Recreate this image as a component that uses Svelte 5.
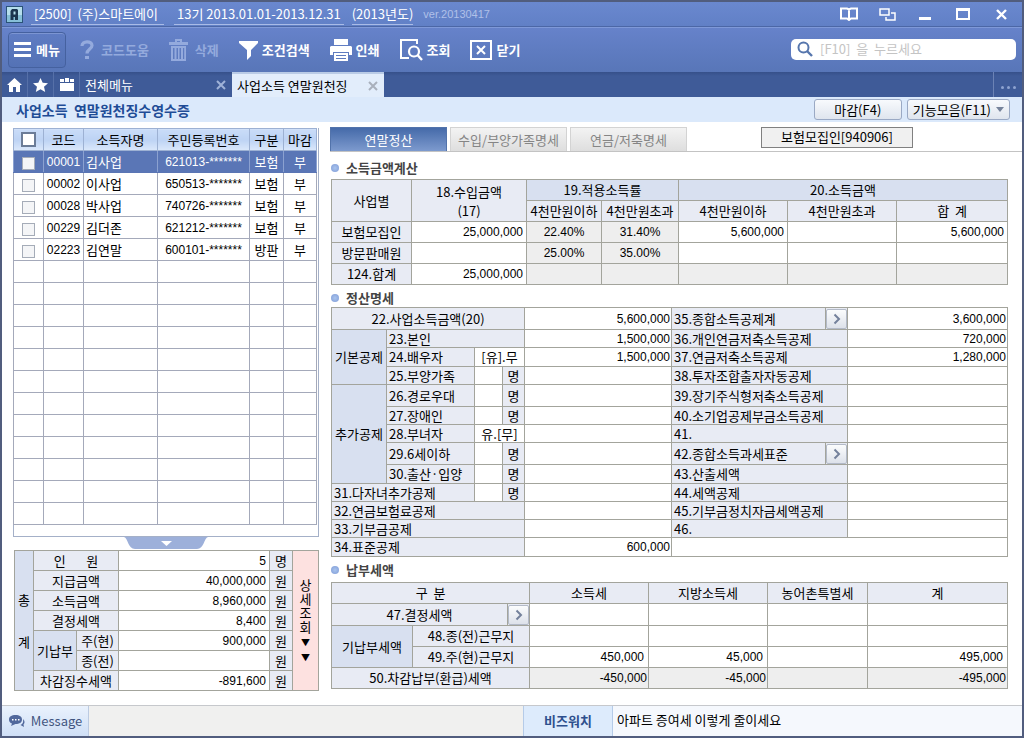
<script lang="ts">
  type Row = {
    size?: string;
    group?: { label: string; span: number };
    label: string;
    labelSpan: number;
    center?: boolean;
    choice?: string;
    count?: boolean;
    value?: string;
    right?: string;
    arrow?: boolean;
    rightValue?: string;
  };

  const menus = [
    { icon: 'help', label: '코드도움', disabled: true },
    { icon: 'trash', label: '삭제', disabled: true },
    { icon: 'filter', label: '조건검색', disabled: false },
    { icon: 'print', label: '인쇄', disabled: false },
    { icon: 'view', label: '조회', disabled: false },
    { icon: 'close', label: '닫기', disabled: false },
  ];

  const people = [
    { code: '00001', name: '김사업', id: '621013-*******', kind: '보험', closed: '부' },
    { code: '00002', name: '이사업', id: '650513-*******', kind: '보험', closed: '부' },
    { code: '00028', name: '박사업', id: '740726-*******', kind: '보험', closed: '부' },
    { code: '00229', name: '김더존', id: '621212-*******', kind: '보험', closed: '부' },
    { code: '02223', name: '김연말', id: '600101-*******', kind: '방판', closed: '부' },
  ];
  const emptyRows = Array(12).fill(0);
  let selected = $state('00001');

  const subTabs = ['연말정산', '수입/부양가족명세', '연금/저축명세'];
  let activeTab = $state('연말정산');

  const incomes = [
    { label: '보험모집인', income: '25,000,000', low: '22.40%', high: '31.40%', a: '5,600,000', total: '5,600,000' },
    { label: '방문판매원', income: '', low: '25.00%', high: '35.00%', a: '', total: '' },
  ];

  const details: Row[] = [
    { size: 'tall', label: '22.사업소득금액(20)', labelSpan: 4, center: true, value: '5,600,000', right: '35.종합소득공제계', arrow: true, rightValue: '3,600,000' },
    { group: { label: '기본공제', span: 3 }, label: '23.본인', labelSpan: 3, value: '1,500,000', right: '36.개인연금저축소득공제', rightValue: '720,000' },
    { size: 'mid', label: '24.배우자', labelSpan: 1, choice: '[유].무', value: '1,500,000', right: '37.연금저축소득공제', rightValue: '1,280,000' },
    { label: '25.부양가족', labelSpan: 1, count: true, right: '38.투자조합출자자동공제' },
    { size: 'tall', group: { label: '추가공제', span: 5 }, label: '26.경로우대', labelSpan: 1, count: true, right: '39.장기주식형저축소득공제' },
    { label: '27.장애인', labelSpan: 1, count: true, right: '40.소기업공제부금소득공제' },
    { label: '28.부녀자', labelSpan: 1, choice: '유.[무]', right: '41.' },
    { size: 'tall', label: '29.6세이하', labelSpan: 1, count: true, right: '42.종합소득과세표준', arrow: true },
    { size: 'mid', label: '30.출산·입양', labelSpan: 1, count: true, right: '43.산출세액' },
    { label: '31.다자녀추가공제', labelSpan: 2, count: true, right: '44.세액공제' },
    { label: '32.연금보험료공제', labelSpan: 4, right: '45.기부금정치자금세액공제' },
    { label: '33.기부금공제', labelSpan: 4, right: '46.' },
    { size: 'mid', label: '34.표준공제', labelSpan: 4, value: '600,000' },
  ];
</script>

{#snippet arrowButton(name: string)}
  <button class="arrow" aria-label={name}>
    <svg width="8" height="12" viewBox="0 0 8 12"><path d="M1.5 1.5 6 6l-4.5 4.5" fill="none" stroke="#74819b" stroke-width="2" /></svg>
  </button>
{/snippet}

{#snippet sectionTitle(text: string)}
  <h2><span class="bullet"></span>{text}</h2>
{/snippet}

<div class="window">
  <header class="titlebar">
    <svg class="logo" width="17" height="17" viewBox="0 0 17 17">
      <rect x="0.5" y="0.5" width="16" height="16" fill="#b5deec" stroke="#2a5378" />
      <path d="M1 9h15v7H1z" fill="#86bfd8" />
      <path d="M6 3h5l1 1v10h-3v-3H7.500v3H4.500V5zM7.500 5.500v3H9.500v-3z" fill="#1b3550" fill-rule="evenodd" />
    </svg>
    <span class="company">[2500]&nbsp; (주)스마트에이</span>
    <span class="term">13기 2013.01.01-2013.12.31</span>
    <span class="year">(2013년도)</span>
    <span class="version">ver.20130417</span>
    <div class="window-buttons">
      <button aria-label="도움말">
        <svg width="18" height="14" viewBox="0 0 18 14"><path d="M1 1.500h6l2 1 2-1h6v10h-6l-2 1.500-2-1.500H1zM9 2v11" fill="none" stroke="#fff" stroke-width="2" /></svg>
      </button>
      <button aria-label="창 전환">
        <svg width="17" height="13" viewBox="0 0 17 13"><path d="M1 1h9v6H1zM12 5h4v7H7V9" fill="none" stroke="#fff" stroke-width="1.500" /></svg>
      </button>
      <button aria-label="최소화">
        <svg width="12" height="14" viewBox="0 0 12 14"><path d="M0 10h12v3H0z" fill="#fff" /></svg>
      </button>
      <button aria-label="최대화">
        <svg width="14" height="13" viewBox="0 0 14 13"><path d="M0 0h14v12H0zM2 3v7h10V3z" fill="#fff" fill-rule="evenodd" /></svg>
      </button>
      <button aria-label="닫기">
        <svg width="11" height="11" viewBox="0 0 11 11"><path d="M1 1l9 9M10 1l-9 9" stroke="#fff" stroke-width="2.400" /></svg>
      </button>
    </div>
  </header>

  <div class="toolbar">
    <button class="menu">
      <svg width="17" height="16" viewBox="0 0 17 16"><path d="M0 0h17v3H0zM0 6h17v3H0zM0 12h17v3H0z" fill="#fff" /></svg>
      메뉴
    </button>
    {#each menus as menu}
      <button class="tool" disabled={menu.disabled}>
        {#if menu.icon === 'help'}
          <svg width="14" height="20" viewBox="0 0 14 20"><path d="M2 6C2 .5 12 .5 12 5.500c0 3.500-5 3.500-5 8" fill="none" stroke="currentColor" stroke-width="3.200" /><path d="M5 16h4v3H5z" fill="currentColor" /></svg>
        {:else if menu.icon === 'trash'}
          <svg width="19" height="22" viewBox="0 0 19 22"><path d="M0 3h6V0h7v3h6v3H0zM8 2v1h3V2zM2 7h15v15H2zM4 9v11h1.500V9zM7.500 9v11H9V9zM10.500 9v11H12V9zM14 9v11h1.200V9z" fill="currentColor" fill-rule="evenodd" /></svg>
        {:else if menu.icon === 'filter'}
          <svg width="19" height="19" viewBox="0 0 19 19"><path d="M0 0h19v2l-7 7v6l-4 4V9L0 2z" fill="currentColor" /></svg>
        {:else if menu.icon === 'print'}
          <svg width="22" height="22" viewBox="0 0 22 22"><path d="M4 0h14v6H4zM1 7h20l1 1v8h-3v-3H3v3H0V8zM4 14h14v8H4zM6 16v1h10v-1zM6 19v1h10v-1z" fill="currentColor" fill-rule="evenodd" /></svg>
        {:else if menu.icon === 'view'}
          <svg width="23" height="22" viewBox="0 0 23 22"><path d="M17 5V1H1v18h8" fill="none" stroke="currentColor" stroke-width="2" /><circle cx="14" cy="12.500" r="5" fill="none" stroke="currentColor" stroke-width="2.200" /><path d="M17.500 16l4.500 5" stroke="currentColor" stroke-width="2.400" /></svg>
        {:else}
          <svg width="22" height="20" viewBox="0 0 22 20"><path d="M1 1h20v18H1zM7 6l8 8M15 6l-8 8" fill="none" stroke="currentColor" stroke-width="2" /></svg>
        {/if}
        {menu.label}
      </button>
    {/each}
    <label class="search">
      <svg width="16" height="16" viewBox="0 0 16 16"><circle cx="6.500" cy="6.500" r="5" fill="none" stroke="#5676ad" stroke-width="2" /><path d="M10 10l5 5" stroke="#5676ad" stroke-width="2.400" /></svg>
      <input type="text" aria-label="검색" placeholder="[F10]  을  누르세요" />
    </label>
  </div>

  <nav class="tabs">
    <button class="icon-tab" aria-label="홈">
      <svg width="15" height="14" viewBox="0 0 15 14"><path d="M7.500 0 15 7h-2v7H9V9H6v5H2V7H0z" fill="#fff" /></svg>
    </button>
    <button class="icon-tab" aria-label="즐겨찾기">
      <svg width="15" height="14" viewBox="0 0 15 14"><path d="M7.500 0l2.200 4.800 5.300.5-4 3.500L12.200 14 7.500 11.300 2.800 14 4 8.800 0 5.300l5.300-.5z" fill="#fff" /></svg>
    </button>
    <button class="icon-tab" aria-label="모음">
      <svg width="14" height="13" viewBox="0 0 14 13"><path d="M0 5h14v8H0zM0 1h4v3H0zM5 0h4v4H5zM10 1h4v3h-4z" fill="#fff" /></svg>
    </button>
    <div class="tab">
      <a href="#all">전체메뉴</a>
      <button aria-label="전체메뉴 닫기"><svg width="10" height="10" viewBox="0 0 10 10"><path d="M1 1l8 8M9 1L1 9" stroke="#9fb2d8" stroke-width="2" /></svg></button>
    </div>
    <div class="tab current">
      <a href="#income">사업소득 연말원천징</a>
      <button aria-label="사업소득 닫기"><svg width="10" height="10" viewBox="0 0 10 10"><path d="M1 1l8 8M9 1L1 9" stroke="#a9b0bc" stroke-width="2" /></svg></button>
    </div>
    <button class="more" aria-label="더보기"><i></i><i></i><i></i></button>
  </nav>

  <div class="page-head">
    <h1>사업소득&nbsp; 연말원천징수영수증</h1>
    <button class="action">마감(F4)</button>
    <button class="action">기능모음(F11)<span class="caret"></span></button>
  </div>

  <main>
    <aside>
      <div class="people">
        <table>
          <colgroup><col class="w30" /><col class="w40" /><col class="w74" /><col class="w92" /><col class="w34" /><col class="w33" /></colgroup>
          <thead>
            <tr>
              <th><input type="checkbox" aria-label="전체 선택" /></th>
              <th>코드</th><th>소득자명</th><th>주민등록번호</th><th>구분</th><th>마감</th>
            </tr>
          </thead>
          <tbody>
            {#each people as person}
              <tr class:selected={selected === person.code} onclick={() => (selected = person.code)}>
                <td><input type="checkbox" aria-label={person.name} /></td>
                <td class="digits">{person.code}</td>
                <td class="left">{person.name}</td>
                <td class="digits">{person.id}</td>
                <td>{person.kind}</td>
                <td>{person.closed}</td>
              </tr>
            {/each}
            {#each emptyRows as _}
              <tr><td></td><td></td><td></td><td></td><td></td><td></td></tr>
            {/each}
          </tbody>
        </table>
      </div>
      <button class="handle" aria-label="합계 접기">
        <svg width="84" height="12" viewBox="0 0 84 12"><path d="M0 0h84c-4 1-4 12-11 12H11C4 12 4 1 0 0z" fill="#9db0da" /><path d="M37 4h11l-5.500 5z" fill="#fff" /></svg>
      </button>
      <table class="sheet summary">
        <colgroup><col class="w19" /><col class="w43" /><col class="w42" /><col class="w151" /><col class="w23" /><col class="w26" /></colgroup>
        <tbody>
          <tr>
            <th class="deep total" rowspan="7">총<br />계</th>
            <th colspan="2">인 &nbsp; &nbsp; &nbsp; 원</th><td class="num">5</td><th>명</th>
            <td class="detail" rowspan="7"><button>상세조회<small>▼</small><small>▼</small></button></td>
          </tr>
          <tr><th colspan="2">지급금액</th><td class="num">40,000,000</td><th>원</th></tr>
          <tr><th colspan="2">소득금액</th><td class="num">8,960,000</td><th>원</th></tr>
          <tr><th colspan="2">결정세액</th><td class="num">8,400</td><th>원</th></tr>
          <tr><th class="deep" rowspan="2">기납부</th><th>주(현)</th><td class="num">900,000</td><th>원</th></tr>
          <tr><th>종(전)</th><td class="num"></td><th>원</th></tr>
          <tr><th colspan="2">차감징수세액</th><td class="num">-891,600</td><th>원</th></tr>
        </tbody>
      </table>
    </aside>

    <div class="content">
      <div class="sub-tabs">
        {#each subTabs as tab}
          <button class:active={activeTab === tab} onclick={() => (activeTab = tab)}>{tab}</button>
        {/each}
        <span class="kind">보험모집인[940906]</span>
      </div>

      <section>
        {@render sectionTitle('소득금액계산')}
        <table class="sheet income">
          <colgroup><col class="w80" /><col class="w115" /><col class="w75" /><col class="w77" /><col class="w109" /><col class="w109" /><col class="w111" /></colgroup>
          <tbody>
            <tr>
              <th rowspan="2">사업별</th>
              <th class="two-line" rowspan="2">18.수입금액<br />(17)</th>
              <th class="deep" colspan="2">19.적용소득률</th>
              <th class="deep" colspan="3">20.소득금액</th>
            </tr>
            <tr><th>4천만원이하</th><th>4천만원초과</th><th>4천만원이하</th><th>4천만원초과</th><th>합 &nbsp;계</th></tr>
            {#each incomes as row}
              <tr>
                <th>{row.label}</th>
                <td class="num">{row.income}</td>
                <td class="gray digits">{row.low}</td>
                <td class="gray digits">{row.high}</td>
                <td class="num">{row.a}</td>
                <td class="num"></td>
                <td class="num">{row.total}</td>
              </tr>
            {/each}
            <tr>
              <th>124.합계</th>
              <td class="num">25,000,000</td>
              <td class="gray"></td><td class="gray"></td><td class="gray"></td><td class="gray"></td><td class="gray"></td>
            </tr>
          </tbody>
        </table>
      </section>

      <section>
        {@render sectionTitle('정산명세')}
        <table class="sheet details">
          <colgroup><col class="w55" /><col class="w88" /><col class="w28" /><col class="w22" /><col class="w147" /><col class="w154" /><col class="w22" /><col class="w160" /></colgroup>
          <tbody>
            {#each details as row}
              <tr class={row.size}>
                {#if row.group}
                  <th class="deep" rowspan={row.group.span}>{row.group.label}</th>
                {/if}
                <th class:left={!row.center} colspan={row.labelSpan}>{row.label}</th>
                {#if row.choice}
                  <td colspan="2">{row.choice}</td>
                {:else if row.count}
                  <td></td><th>명</th>
                {/if}
                <td class="num">{row.value ?? ''}</td>
                {#if row.right}
                  <th class="left" colspan={row.arrow ? 1 : 2}>{row.right}</th>
                  {#if row.arrow}
                    <th>{@render arrowButton(row.right)}</th>
                  {/if}
                  <td class="num">{row.rightValue ?? ''}</td>
                {:else}
                  <td colspan="3"></td>
                {/if}
              </tr>
            {/each}
          </tbody>
        </table>
      </section>

      <section>
        {@render sectionTitle('납부세액')}
        <table class="sheet tax">
          <colgroup><col class="w81" /><col class="w95" /><col class="w22" /><col class="w119" /><col class="w119" /><col class="w100" /><col class="w140" /></colgroup>
          <tbody>
            <tr><th colspan="3">구 &nbsp;분</th><th>소득세</th><th>지방소득세</th><th>농어촌특별세</th><th>계</th></tr>
            <tr class="tall">
              <th colspan="2">47.결정세액</th>
              <th>{@render arrowButton('47.결정세액')}</th>
              <td></td><td></td><td></td><td></td>
            </tr>
            <tr><th class="deep" rowspan="2">기납부세액</th><th colspan="2">48.종(전)근무지</th><td></td><td></td><td></td><td></td></tr>
            <tr class="inset"><th colspan="2">49.주(현)근무지</th><td class="num">450,000</td><td class="num">45,000</td><td></td><td class="num">495,000</td></tr>
            <tr>
              <th colspan="3">50.차감납부(환급)세액</th>
              <td class="gray num">-450,000</td><td class="gray num">-45,000</td><td class="gray"></td><td class="gray num">-495,000</td>
            </tr>
          </tbody>
        </table>
      </section>
    </div>
  </main>

  <footer>
    <button class="message">
      <svg width="17" height="14" viewBox="0 0 17 14"><path d="M7.500 1C11.500 1 14 2.500 14 5.500S11.500 10 7.500 10L3 12l1-2.500C2 9 1 7.500 1 5.500 1 2.500 3.500 1 7.500 1z" fill="#51689c" /><path d="M15 5c2 2 2 4 .500 5.500l.5 2.500-3.500-2C15 10 15.500 8 15 5z" fill="#51689c" /><path d="M4 5h1.500v1.500H4zM7 5h1.500v1.500H7zM10 5h1.500v1.500H10z" fill="#fff" /></svg>
      Message
    </button>
    <div class="status"></div>
    <button class="watch">비즈워치</button>
    <a class="news" href="#news">아파트 증여세 이렇게 줄이세요</a>
  </footer>
</div>

<style>
  :global(body) {
    margin: 0;
  }

  .window {
    display: flex;
    flex-direction: column;
    min-height: 100vh;
    box-sizing: border-box;
    border: 2px solid #515d7e;
    background: #fff;
    color: #000;
    font-family: 'Noto Sans CJK KR', sans-serif;
    font-size: 13px;
    line-height: 16px;
  }

  button,
  input {
    font: inherit;
    color: inherit;
  }

  button {
    display: flex;
    align-items: center;
    justify-content: center;
    margin: 0;
    padding: 0;
    border: none;
    background: none;
    white-space: nowrap;
  }

  a {
    color: inherit;
    text-decoration: none;
  }

  svg {
    display: block;
    flex: none;
  }

  /* title bar */
  .titlebar {
    display: flex;
    align-items: center;
    height: 24px;
    padding: 0 12px 0 4px;
    border-bottom: 1px solid #4c67a6;
    background: linear-gradient(#6a88cf, #6180c6);
    color: #fff;
  }

  .company,
  .term,
  .year {
    height: 20px;
    line-height: 20px;
    padding: 0 3px;
    border-bottom: 1px solid #a9bbe6;
    white-space: nowrap;
  }

  .company {
    width: 127px;
    margin-left: 8px;
  }

  .term {
    margin-left: 10px;
  }

  .year {
    margin-left: 8px;
    padding: 0;
  }

  .version {
    margin-left: 10px;
    color: #b0c0e8;
    font-family: 'Liberation Sans', sans-serif;
    font-size: 11px;
  }

  .window-buttons {
    display: flex;
    align-items: center;
    gap: 20px;
    margin-left: auto;
  }

  .window-buttons button {
    width: 18px;
  }

  /* toolbar */
  .toolbar {
    display: flex;
    align-items: center;
    gap: 20px;
    height: 44px;
    padding: 0 6px;
    border-top: 1px solid #7f99d8;
    background: linear-gradient(#6682ca, #5876b8);
    color: #fff;
    font-weight: 700;
  }

  .menu {
    gap: 5px;
    width: 58px;
    height: 36px;
    margin-right: -6px;
    border: 1px solid #45619f;
    border-radius: 4px;
    background: linear-gradient(#5f7cc3, #5472b5);
    box-shadow: inset 0 1px 0 #7c95d2;
  }

  .tool {
    gap: 4px;
  }

  .tool:disabled {
    gap: 7px;
    color: #94aadd;
  }

  .search {
    display: flex;
    align-items: center;
    gap: 7px;
    box-sizing: border-box;
    width: 225px;
    height: 21px;
    margin: 0 0 2px auto;
    padding: 0 6px;
    border-radius: 5px;
    background: #fff;
  }

  .search input {
    width: 100%;
    min-width: 0;
    padding: 0;
    border: none;
    outline: none;
    background: none;
    color: #333;
    font-weight: 400;
  }

  .search input::placeholder {
    color: #c4c4c4;
    opacity: 1;
  }

  /* document tabs */
  .tabs {
    display: flex;
    height: 25px;
    background: linear-gradient(#36508a, #3f5b98 4px);
    color: #fff;
  }

  .icon-tab {
    box-sizing: border-box;
    width: 26px;
    border-right: 1px solid #5670a8;
  }

  .tab {
    display: flex;
    align-items: center;
    justify-content: space-between;
    box-sizing: border-box;
    width: 152px;
    padding: 0 6px 0 5px;
    white-space: nowrap;
  }

  .tab.current {
    border-top: 2px solid #b9cbe6;
    background: #e2edfb;
    color: #000;
  }

  .more {
    gap: 3px;
    width: 29px;
    margin-left: auto;
    padding-top: 6px;
    box-sizing: border-box;
    border-left: 1px solid #6c83b5;
  }

  .more i {
    width: 3px;
    height: 3px;
    border-radius: 50%;
    background: #8ea3d0;
  }

  /* page title */
  .page-head {
    display: flex;
    align-items: center;
    gap: 5px;
    height: 25px;
    padding: 0 12px 0 14px;
    background: #dbe9fb;
  }

  h1 {
    margin: 0 auto 0 0;
    color: #1f4c96;
    font-size: 14px;
    line-height: 20px;
  }

  .action {
    gap: 5px;
    box-sizing: border-box;
    min-width: 88px;
    height: 21px;
    padding: 0 5px;
    border: 1px solid #9aa9c4;
    border-radius: 3px;
    background: linear-gradient(#f8fafd, #dfe5ee);
    font-size: 13px;
  }

  .caret {
    border: 4px solid transparent;
    border-top: 5px solid #76839b;
    border-bottom: none;
  }

  /* body */
  main {
    display: flex;
    flex: 1;
    gap: 11px;
    padding: 5px 0 14px 11px;
  }

  aside {
    flex: 0 0 306px;
    padding-top: 1px;
  }

  table {
    width: 100%;
    border-collapse: collapse;
    table-layout: fixed;
  }

  th,
  td {
    padding: 0;
    font-weight: 400;
    text-align: center;
    white-space: nowrap;
  }

  .left {
    padding-left: 2px;
    text-align: left;
  }

  .num,
  .digits {
    font-family: 'Liberation Sans Narrow', 'Liberation Sans', sans-serif;
    font-size: 12px;
  }

  .num {
    padding-right: 3px;
    text-align: right;
  }

  .people {
    padding: 0 1px 11px 0;
    border: 1px solid #a4b0c8;
    border-width: 0 1px 1px 0;
    box-shadow: inset 1px 0 0 #a4b0c8;
  }

  .people tr {
    height: 22px;
  }

  .people th,
  .people td {
    border: 1px solid #a4a9ba;
  }

  .people th {
    border-color: #9db1d3;
    background: linear-gradient(#c9dcf8, #bdd3f4 50%, #dbe8fb);
  }

  .people .selected td {
    border-color: #5a75b4 #8ba1d0;
    background: #5a76b6;
    color: #fff;
  }

  .people input {
    display: block;
    box-sizing: border-box;
    width: 13px;
    height: 13px;
    margin: 3px auto 0;
    appearance: none;
    border: 1px solid #a5acb8;
    background: #f4f5f7;
  }

  .people th input {
    width: 15px;
    height: 15px;
    margin-top: 0;
    border: 2px solid #6b7c98;
    background: #fff;
  }

  .handle {
    width: 84px;
    height: 13px;
    margin: 0 auto;
    align-items: flex-start;
  }

  .sheet th,
  .sheet td {
    border: 1px solid #a3a49c;
  }

  .sheet th {
    background: #e8ebf4;
  }

  .sheet th.deep {
    background: #d8e0f0;
  }

  .sheet .gray {
    background: #eee;
  }

  .summary {
    width: 305px;
    margin-left: 1px;
  }

  .summary tr {
    height: 20px;
  }

  .total {
    line-height: 42px;
  }

  .summary .detail {
    background: #fde1e0;
  }

  .detail button {
    flex-direction: column;
    gap: 3px;
    width: 13px;
    margin: 0 auto;
    line-height: 14px;
    white-space: normal;
    word-break: break-all;
  }

  .detail small {
    font-size: 9px;
    line-height: 12px;
  }

  /* right side */
  .content {
    flex: 1;
    min-width: 0;
  }

  .sub-tabs {
    display: flex;
    gap: 3px;
    height: 24px;
    border-bottom: 1px solid #c3c3c3;
  }

  .sub-tabs button {
    width: 117px;
    border: 1px solid #d3d3d3;
    border-bottom: none;
    box-sizing: border-box;
    background: linear-gradient(#f3f3f3, #dedede);
    color: #858585;
  }

  .sub-tabs button.active {
    border-color: #5273ab;
    background: linear-gradient(#456aa9, #7d9ace);
    color: #fff;
  }

  .kind {
    box-sizing: border-box;
    width: 152px;
    height: 21px;
    margin: 0 109px 0 auto;
    border: 1px solid #808080;
    background: #f0f0f0;
    line-height: 18px;
    text-align: center;
  }

  section {
    padding: 0 14px 0 1px;
  }

  h2 {
    display: flex;
    align-items: center;
    gap: 7px;
    box-sizing: border-box;
    height: 22px;
    margin: 0;
    padding-top: 4px;
    color: #444;
    font-size: 13px;
    line-height: 16px;
  }

  section:nth-of-type(1) h2 {
    height: 27px;
  }

  section:nth-of-type(3) h2 {
    height: 25px;
    padding-top: 0;
  }

  .bullet {
    width: 8px;
    height: 8px;
    border-radius: 50%;
    background: radial-gradient(#a9c4ee, #7f9bd6);
  }

  .two-line {
    line-height: 19px;
  }

  .income tr,
  .tax tr {
    height: 21px;
  }

  .details tr {
    height: 18px;
  }

  .details .mid {
    height: 19px;
  }

  .sheet .tall {
    height: 22px;
  }

  .details .num {
    padding-right: 1px;
  }

  .tax .num {
    padding-right: 1px;
  }

  .tax .inset .num {
    padding-right: 4px;
  }

  .arrow {
    box-sizing: border-box;
    width: 100%;
    height: 20px;
    border: 1px solid #b3bac8;
    border-radius: 2px;
    background: linear-gradient(#fbfcfd, #dde1ea);
  }

  .w19 { width: 19px; }
  .w22 { width: 22px; }
  .w23 { width: 23px; }
  .w26 { width: 26px; }
  .w28 { width: 28px; }
  .w30 { width: 30px; }
  .w33 { width: 33px; }
  .w34 { width: 34px; }
  .w40 { width: 40px; }
  .w42 { width: 42px; }
  .w43 { width: 43px; }
  .w55 { width: 55px; }
  .w74 { width: 74px; }
  .w75 { width: 75px; }
  .w77 { width: 77px; }
  .w80 { width: 80px; }
  .w81 { width: 81px; }
  .w88 { width: 88px; }
  .w92 { width: 92px; }
  .w95 { width: 95px; }
  .w100 { width: 100px; }
  .w109 { width: 109px; }
  .w111 { width: 111px; }
  .w115 { width: 115px; }
  .w119 { width: 119px; }
  .w140 { width: 140px; }
  .w147 { width: 147px; }
  .w151 { width: 151px; }
  .w154 { width: 154px; }
  .w160 { width: 160px; }

  /* status bar */
  footer {
    display: flex;
    height: 30px;
    border-top: 1px solid #c6c8cc;
  }

  .message {
    gap: 6px;
    width: 87px;
    box-sizing: border-box;
    border-right: 1px solid #bccbe2;
    background: linear-gradient(#eaf2fd, #cfdff6);
    color: #42557f;
  }

  .status {
    flex: 1;
    background: #f0f0ef;
  }

  .watch {
    width: 90px;
    box-sizing: border-box;
    border: 1px solid #b5cbe8;
    border-width: 0 1px;
    background: #ddebfc;
    color: #2d4f8d;
    font-weight: 700;
  }

  .news {
    box-sizing: border-box;
    width: 409px;
    padding-left: 4px;
    background: #f5f8fd;
    line-height: 28px;
  }
</style>
